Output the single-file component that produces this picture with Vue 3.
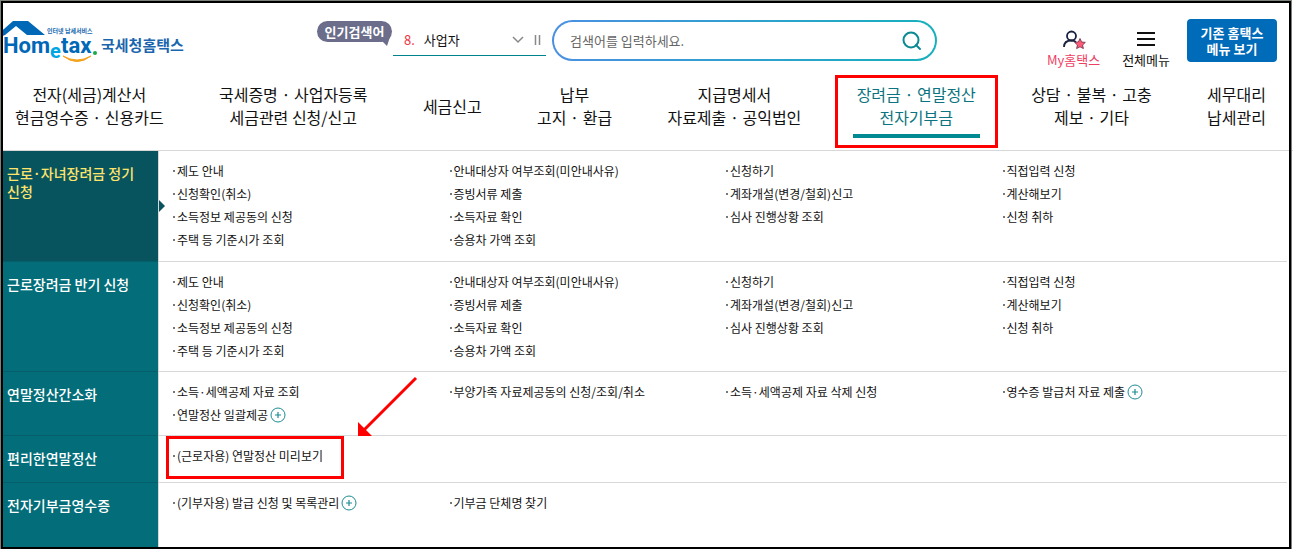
<script setup>
import { ref } from 'vue'

const keyword = ref('')

const menus = [
  { lines: ['전자(세금)계산서', '현금영수증 · 신용카드'] },
  { lines: ['국세증명 · 사업자등록', '세금관련 신청/신고'] },
  { lines: ['세금신고'] },
  { lines: ['납부', '고지 · 환급'] },
  { lines: ['지급명세서', '자료제출 · 공익법인'] },
  { lines: ['장려금 · 연말정산', '전자기부금'], active: true },
  { lines: ['상담 · 불복 · 고충', '제보 · 기타'] },
  { lines: ['세무대리', '납세관리'] },
]

const incentive = [
  ['제도 안내', '신청확인(취소)', '소득정보 제공동의 신청', '주택 등 기준시가 조회'],
  ['안내대상자 여부조회(미안내사유)', '증빙서류 제출', '소득자료 확인', '승용차 가액 조회'],
  ['신청하기', '계좌개설(변경/철회)신고', '심사 진행상황 조회'],
  ['직접입력 신청', '계산해보기', '신청 취하'],
].map((col) => col.map((text) => ({ text })))

const sections = [
  { title: '근로·자녀장려금 정기 신청', active: true, columns: incentive },
  { title: '근로장려금 반기 신청', columns: incentive },
  {
    title: '연말정산간소화',
    columns: [
      [{ text: '소득·세액공제 자료 조회' }, { text: '연말정산 일괄제공', more: true }],
      [{ text: '부양가족 자료제공동의 신청/조회/취소' }],
      [{ text: '소득·세액공제 자료 삭제 신청' }],
      [{ text: '영수증 발급처 자료 제출', more: true }],
    ],
  },
  { title: '편리한연말정산', columns: [[{ text: '(근로자용) 연말정산 미리보기', marked: true }]] },
  {
    title: '전자기부금영수증',
    columns: [[{ text: '(기부자용) 발급 신청 및 목록관리', more: true }], [{ text: '기부금 단체명 찾기' }]],
  },
]
</script>

<template>
  <div class="page">
    <header class="topbar">
      <a href="#" class="logo" aria-label="국세청홈택스">
        <svg width="190" height="48" viewBox="0 0 190 48">
          <path d="M0 13 L4 10 L13 2 H28 L45 16 H27 L16 7 L5 16 L0 18 Z" fill="#0068b7" />
          <text x="47" y="14" class="logo-small">인터넷 납세서비스</text>
          <text x="3" y="34" class="logo-en">Hom</text>
          <text x="50" y="39" class="logo-e">e</text>
          <text x="61" y="34" class="logo-en">tax</text>
          <circle cx="95" cy="34" r="2" fill="#19a84a" />
          <path d="M63 37 Q77 48 91 37 Q77 45 63 37 Z" fill="#f5a21b" stroke="#f5a21b" />
          <text x="101" y="32" class="logo-ko">국세청홈택스</text>
        </svg>
      </a>

      <strong class="badge">인기검색어</strong>

      <div class="rank">
        <a href="#"><em>8.</em>사업자</a>
        <button type="button" aria-label="펼치기">
          <svg width="12" height="8" viewBox="0 0 12 8"><path d="M1 1 L6 6 L11 1" fill="none" stroke="#888" stroke-width="1.5" /></svg>
        </button>
        <button type="button" aria-label="정지">
          <svg width="7" height="10" viewBox="0 0 7 10"><path d="M1.5 0 V10 M5.5 0 V10" stroke="#888" stroke-width="1.5" /></svg>
        </button>
      </div>

      <form class="search" @submit.prevent>
        <input v-model="keyword" type="text" aria-label="검색어" placeholder="검색어를 입력하세요." />
        <button type="submit" aria-label="검색">
          <svg width="20" height="20" viewBox="0 0 20 20"><g fill="none" stroke="#0b8a93" stroke-width="2"><circle cx="9" cy="9" r="7.5" /><path d="M14 14 L18 18" stroke-linecap="round" /></g></svg>
        </button>
      </form>

      <div class="utils">
        <a href="#" class="util my">
          <svg width="24" height="20" viewBox="0 0 24 20">
            <g fill="none" stroke="#1b2140" stroke-width="1.8"><circle cx="9.5" cy="6" r="4.5" /><path d="M2 17 Q2 10.5 9.5 10.5 Q12 10.5 14 12" /></g>
            <path d="M18 8.5 L19.6 12 L23.3 12.4 L20.6 15 L21.4 18.6 L18 16.8 L14.6 18.6 L15.4 15 L12.7 12.4 L16.4 12 Z" fill="#ff5a78" stroke="#6a2a44" stroke-width="0.8" stroke-linejoin="round" />
          </svg>
          My홈택스
        </a>
        <a href="#" class="util">
          <svg width="24" height="20" viewBox="0 0 24 20"><path d="M3 3 H21 M3 9 H21 M3 15 H21" stroke="#111" stroke-width="2" /></svg>
          전체메뉴
        </a>
        <button type="button" class="old-menu">기존 홈택스<br />메뉴 보기</button>
      </div>
    </header>

    <nav class="gnb">
      <a v-for="(menu, i) in menus" :key="i" href="#" :class="{ active: menu.active }">
        <span v-for="line in menu.lines" :key="line">{{ line }}</span>
      </a>
    </nav>

    <main class="panel">
      <section v-for="section in sections" :key="section.title" class="row" :class="{ active: section.active }">
        <h2>{{ section.title }}</h2>
        <div class="columns">
          <ul v-for="(col, c) in section.columns" :key="c">
            <li v-for="item in col" :key="item.text" :class="{ marked: item.marked }">
              <a href="#">{{ item.text }}</a>
              <button v-if="item.more" type="button" class="more" aria-label="더보기">
                <svg width="16" height="16" viewBox="0 0 16 16"><g fill="none" stroke="#1b8c93"><circle cx="8" cy="8" r="7" /><path d="M8 5 V11 M5 8 H11" stroke-width="1.2" /></g></svg>
              </button>
              <svg v-if="item.marked" class="arrow" width="62" height="62" viewBox="0 0 62 62">
                <path d="M60 2 L8 54" stroke="#f00" stroke-width="3" />
                <path d="M2 46 V60 H16 Z" fill="#f00" />
              </svg>
            </li>
          </ul>
        </div>
      </section>
    </main>
    <div class="frame"></div>
  </div>
</template>

<style>
body {
  margin: 0;
}
#app {
  min-height: 100vh;
  display: flex;
}
</style>

<style scoped>
.page {
  position: relative;
  flex: 1;
  display: flex;
  flex-direction: column;
  min-height: 100vh;
  overflow: hidden;
  background: #fff;
  color: #111;
  font-family: "Noto Sans CJK KR", "Noto Sans", sans-serif;
  font-size: 13px;
}
.page *,
.page *::before,
.page *::after {
  box-sizing: border-box;
}
a {
  color: inherit;
  text-decoration: none;
}
button {
  padding: 0;
  border: 0;
  background: none;
  font: inherit;
  cursor: pointer;
}
svg {
  display: block;
}
.frame {
  position: absolute;
  inset: 1px 2px 0 1px;
  border: 2px solid #000;
  box-shadow: 0 0 0 1px #7c827c;
  pointer-events: none;
}

.topbar {
  display: flex;
  align-items: flex-start;
  padding: 19px 16px 0 0;
}
.logo-small {
  font-size: 6px;
  font-weight: 700;
  fill: #1667ae;
}
.logo-en {
  font-family: Roboto, "Liberation Sans", sans-serif;
  font-size: 22px;
  font-weight: 700;
  fill: #0068b7;
}
.logo-e {
  font-family: Roboto, "Liberation Sans", sans-serif;
  font-size: 20px;
  font-weight: 700;
  fill: #00a5e3;
}
.logo-ko {
  font-size: 15px;
  font-weight: 700;
  fill: #1a65ad;
}
.badge {
  position: relative;
  margin: 2px 0 0 127px;
  width: 75px;
  border-radius: 11px;
  background: #6b6d8a;
  color: #fff;
  line-height: 21px;
  text-align: center;
}
.badge::after {
  content: "";
  position: absolute;
  right: 2px;
  bottom: -4px;
  border-top: 9px solid #6b6d8a;
  border-left: 9px solid transparent;
  border-right: 3px solid transparent;
}
.rank {
  display: flex;
  align-items: center;
  gap: 10px;
  width: 153px;
  height: 37px;
  margin-left: 1px;
  padding: 5px 5px 0 11px;
  border-bottom: 1px solid #00838c;
}
.rank a {
  flex: 1;
}
.rank em {
  margin-right: 9px;
  color: #f0323c;
  font-style: normal;
}
.search {
  display: flex;
  align-items: center;
  width: 385px;
  height: 41px;
  margin: 1px 0 0 6px;
  padding: 0 13px 0 16px;
  border: 2px solid transparent;
  border-radius: 21px;
  background: linear-gradient(#fff, #fff) padding-box, linear-gradient(90deg, #4a90e2, #16b0bd) border-box;
}
.search input {
  flex: 1;
  min-width: 0;
  padding: 0;
  border: 0;
  outline: 0;
  background: none;
  font: inherit;
}
.search input::placeholder {
  color: #666;
  opacity: 1;
}
.utils {
  display: flex;
  align-items: flex-start;
  margin-left: auto;
}
.util {
  display: flex;
  flex-direction: column;
  align-items: center;
  margin: 11px 17px 0 0;
  line-height: 20px;
}
.util.my {
  margin-right: 22px;
  color: #ee3e62;
}
.old-menu {
  width: 90px;
  height: 43px;
  border-radius: 4px;
  background: #006bb8;
  color: #fff;
  font-weight: 700;
  line-height: 16px;
}

.gnb {
  display: flex;
  justify-content: space-between;
  padding: 13px 27px 21px 15px;
  border-bottom: 1px solid #d8d8d8;
  font-size: 16px;
  line-height: 23px;
}
.gnb a {
  position: relative;
  display: flex;
  flex-direction: column;
  justify-content: center;
  text-align: center;
}
.gnb .active {
  color: #0b7480;
}
.gnb .active::before {
  content: "";
  position: absolute;
  inset: auto -4px -9px;
  height: 4px;
  background: #008a94;
}
.gnb .active::after {
  content: "";
  position: absolute;
  inset: -8px -22px -19px;
  border: 3px solid #f00;
}

.panel {
  flex: 1;
  display: grid;
  grid-template-rows: 111px 110px 64px 47px 1fr;
}
.row {
  position: relative;
  display: flex;
}
h2 {
  width: 158px;
  margin: 0;
  padding: 13px 16px 0 7px;
  border-bottom: 1px solid #055f6b;
  background: #036d79;
  color: #fff;
  font-size: 14px;
  font-weight: 500;
  line-height: 18px;
  word-break: keep-all;
}
.row.active h2 {
  background: #07545f;
  color: #ffe46b;
}
.row.active::after {
  content: "";
  position: absolute;
  left: 159px;
  top: 49px;
  border: 6px solid transparent;
  border-left-color: #07545f;
  border-right: 0;
}
.columns {
  flex: 1;
  display: grid;
  grid-template-columns: repeat(4, 1fr);
  margin-right: 6px;
  padding: 8px 8px 0 14px;
  border-left: 1px solid #d8d8d8;
  border-bottom: 1px solid #d8d8d8;
}
.row:last-child .columns,
.row:last-child h2 {
  border-bottom: 0;
}
ul {
  margin: 0;
  padding: 0;
  list-style: none;
  font-size: 12px;
  line-height: 23px;
}
li {
  position: relative;
  display: flex;
  align-items: center;
}
li::before {
  content: "";
  width: 2px;
  height: 2px;
  margin-right: 2px;
  background: #777;
}
.more {
  margin-left: 2px;
}
.marked::after {
  content: "";
  position: absolute;
  left: -7px;
  top: -8px;
  width: 178px;
  height: 43px;
  border: 3px solid #f00;
}
.arrow {
  position: absolute;
  left: 183px;
  top: -68px;
}
</style>
